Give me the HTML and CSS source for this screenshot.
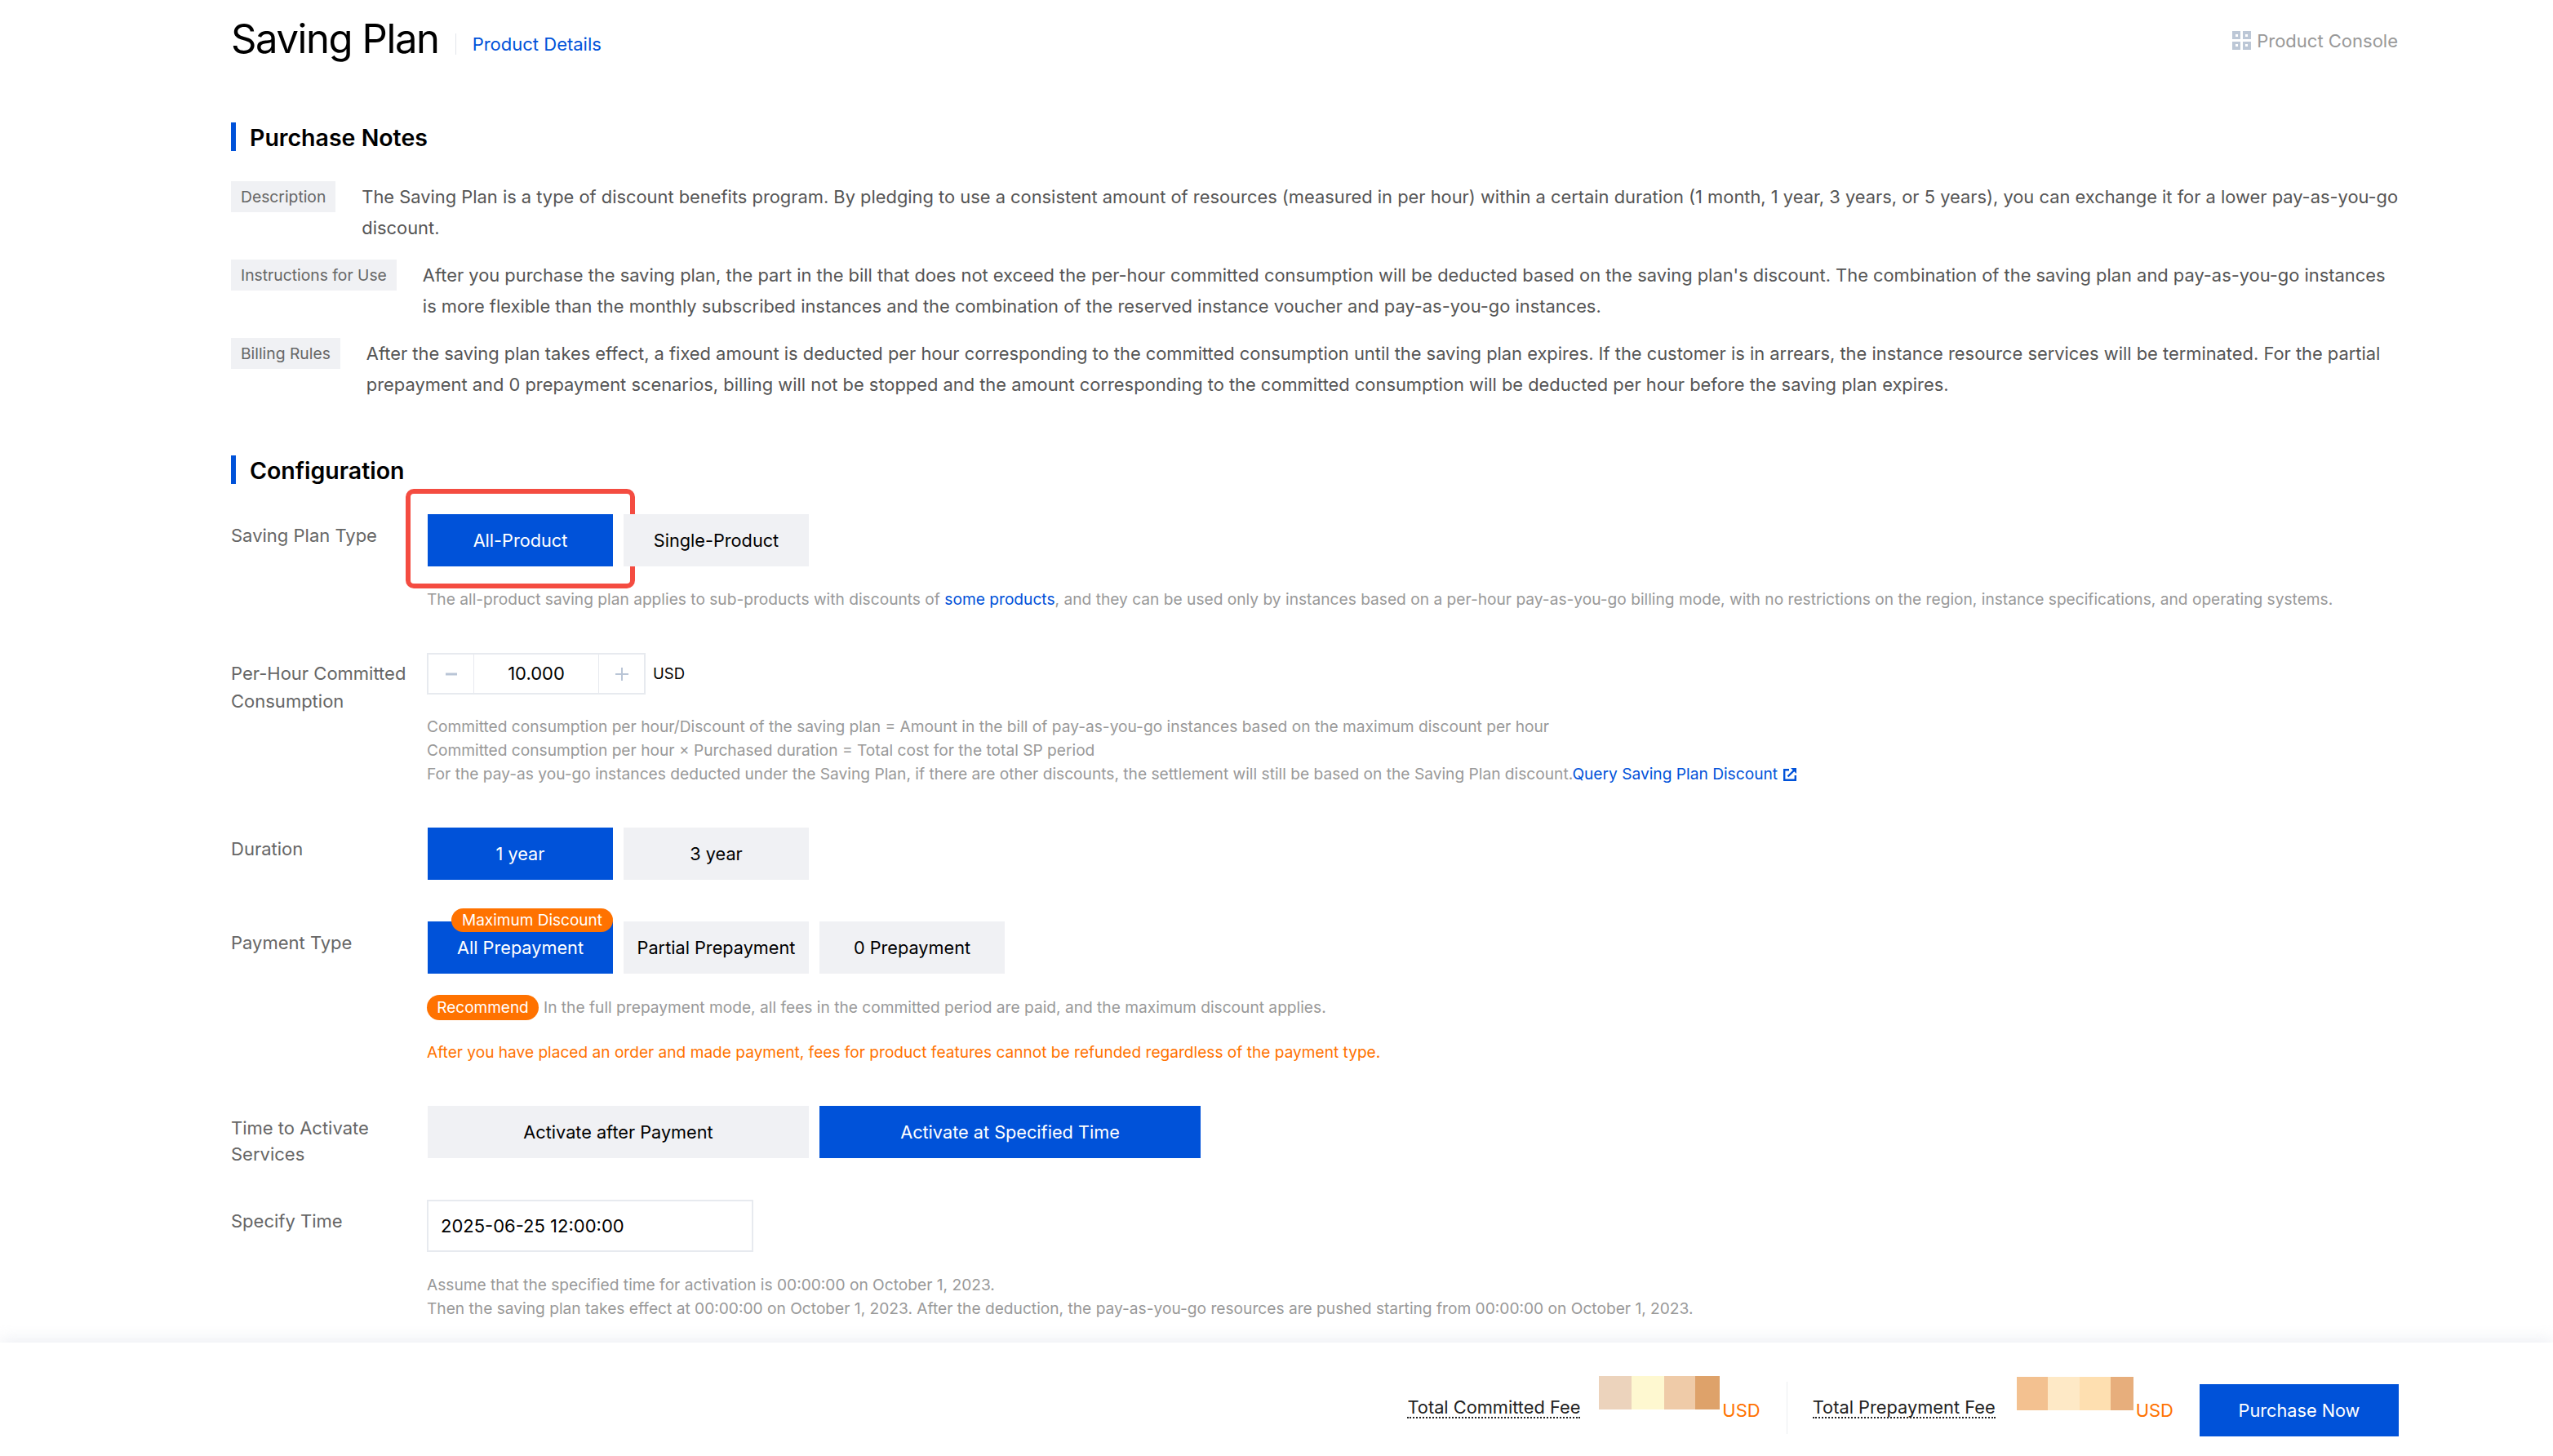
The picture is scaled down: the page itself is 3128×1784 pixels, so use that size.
FILE: index.html
```html
<!DOCTYPE html>
<html lang="en">
<head>
  <meta charset="UTF-8" />
  <title>Saving Plan</title>
  <link rel="stylesheet" href="styles.css">
</head>
<body>
  <main class="page">
    <header class="top">
      <h1>Saving Plan</h1>
      <a class="details">Product Details</a>
      <a class="console">
        <svg width="23" height="23" viewBox="0 0 23 23"><path fill="#bcc7d6" fill-rule="evenodd" d="M0 0h10v10H0zM4 4v3h3V4zM13 0h10v10H13zM16 4v3h3V4zM0 13h10v10H0zM4 16v3h3v-3zM13 13h10v10H13zM16 16v3h3v-3z"/></svg>
        Product Console
      </a>
    </header>

    <h2 class="section-title notes-title">Purchase Notes</h2>
    <div class="note">
      <span class="tag">Description</span>
      <p>The Saving Plan is a type of discount benefits program. By pledging to use a consistent amount of resources (measured in per hour) within a certain duration (1 month, 1 year, 3 years, or 5 years), you can exchange it for a lower pay-as-you-go discount.</p>
    </div>
    <div class="note">
      <span class="tag">Instructions for Use</span>
      <p>After you purchase the saving plan, the part in the bill that does not exceed the per-hour committed consumption will be deducted based on the saving plan's discount. The combination of the saving plan and pay-as-you-go instances is more flexible than the monthly subscribed instances and the combination of the reserved instance voucher and pay-as-you-go instances.</p>
    </div>
    <div class="note">
      <span class="tag">Billing Rules</span>
      <p>After the saving plan takes effect, a fixed amount is deducted per hour corresponding to the committed consumption until the saving plan expires. If the customer is in arrears, the instance resource services will be terminated. For the partial prepayment and 0 prepayment scenarios, billing will not be stopped and the amount corresponding to the committed consumption will be deducted per hour before the saving plan expires.</p>
    </div>

    <h2 class="section-title config-title">Configuration</h2>

    <div class="row row-type">
      <label>Saving Plan Type</label>
      <div class="field">
        <div class="options">
          <button class="opt active">All-Product<span class="highlight"></span></button>
          <button class="opt">Single-Product</button>
        </div>
        <p class="hint hint-type">The all-product saving plan applies to sub-products with discounts of <a class="link">some products</a>, and they can be used only by instances based on a per-hour pay-as-you-go billing mode, with no restrictions on the region, instance specifications, and operating systems.</p>
      </div>
    </div>

    <div class="row">
      <label class="label-top">Per-Hour Committed Consumption</label>
      <div class="field">
        <div class="amount">
          <div class="stepper">
            <span class="step">
              <svg width="14" height="14" viewBox="0 0 14 14"><path fill="#b9c5d6" d="M0 5.500h14v3H0z"/></svg>
            </span>
            <span class="value">10.000</span>
            <span class="step">
              <svg width="16" height="16" viewBox="0 0 16 16"><path fill="#b9c5d6" d="M0 7h16v2H0zM7 0h2v16H7z"/></svg>
            </span>
          </div>
          <span class="unit">USD</span>
        </div>
        <p class="hint hint-amount">Committed consumption per hour/Discount of the saving plan = Amount in the bill of pay-as-you-go instances based on the maximum discount per hour<br>
        Committed consumption per hour × Purchased duration = Total cost for the total SP period<br>
        For the pay-as you-go instances deducted under the Saving Plan, if there are other discounts, the settlement will still be based on the Saving Plan discount.<a class="link">Query Saving Plan Discount
          <svg class="ext" width="16" height="16" viewBox="0 0 16 16"><path fill="none" stroke="#0052d9" stroke-width="2.400" d="M7 2.200H1.200v12.600h13.600V9"/><path fill="none" stroke="#0052d9" stroke-width="2.400" d="M5.500 10.500 13 3"/><path fill="#0052d9" d="M9 0h7v7z"/></svg></a></p>
      </div>
    </div>

    <div class="row">
      <label>Duration</label>
      <div class="field">
        <div class="options">
          <button class="opt active">1 year</button>
          <button class="opt">3 year</button>
        </div>
      </div>
    </div>

    <div class="row">
      <label>Payment Type</label>
      <div class="field">
        <div class="options">
          <button class="opt active">All Prepayment<span class="badge">Maximum Discount</span></button>
          <button class="opt">Partial Prepayment</button>
          <button class="opt">0 Prepayment</button>
        </div>
        <div class="recommend">
          <span class="pill">Recommend</span>
          <span class="hint">In the full prepayment mode, all fees in the committed period are paid, and the maximum discount applies.</span>
        </div>
        <p class="warn">After you have placed an order and made payment, fees for product features cannot be refunded regardless of the payment type.</p>
      </div>
    </div>

    <div class="row">
      <label class="label-time">Time to Activate Services</label>
      <div class="field">
        <div class="options">
          <button class="opt wide">Activate after Payment</button>
          <button class="opt wide active">Activate at Specified Time</button>
        </div>
      </div>
    </div>

    <div class="row">
      <label>Specify Time</label>
      <div class="field">
        <div class="date">2025-06-25 12:00:00</div>
        <p class="hint hint-time">Assume that the specified time for activation is 00:00:00 on October 1, 2023.<br>
        Then the saving plan takes effect at 00:00:00 on October 1, 2023. After the deduction, the pay-as-you-go resources are pushed starting from 00:00:00 on October 1, 2023.</p>
      </div>
    </div>
  </main>

  <footer class="bar">
    <div class="fee">
      <span class="fee-name">Total Committed Fee</span>
      <span class="blur blur-a"><i class="c1"></i><i class="c2"></i><i class="c3"></i><i class="c4"></i></span>
      <span class="fee-unit">USD</span>
    </div>
    <span class="bar-line"></span>
    <div class="fee">
      <span class="fee-name">Total Prepayment Fee</span>
      <span class="blur blur-b"><i class="c5"></i><i class="c6"></i><i class="c7"></i><i class="c8"></i></span>
      <span class="fee-unit">USD</span>
    </div>
    <button class="buy">Purchase Now</button>
  </footer>
</body>
</html>
```

FILE: styles.css
```css
* {
  box-sizing: border-box;
}
html, body {
  height: 100%;
}
body {
  margin: 0;
  display: flex;
  flex-direction: column;
  height: 1784px;
  overflow: hidden;
  background: #fff;
  color: #000;
  font-family: Inter, "Noto Sans", sans-serif;
  font-size: 22px;
}
p, h1, h2 {
  margin: 0;
}
.page {
  flex: 1;
  min-height: 0;
  padding: 0 190px 0 283px;
}

/* top */
.top {
  display: flex;
  align-items: center;
  height: 96px;
}
h1 {
  font-size: 49px;
  font-weight: 400;
  letter-spacing: -1.4px;
  line-height: 92px;
  color: #000;
}
.details {
  margin: 12px 0 0 20px;
  padding-left: 20px;
  border-left: 1px solid #e3e6eb;
  font-size: 22px;
  line-height: 26px;
  color: #0052d9;
}
.console {
  display: flex;
  align-items: center;
  gap: 7px;
  margin: 3px 0 0 auto;
  font-size: 22px;
  color: #999;
}

/* sections */
.section-title {
  height: 35px;
  padding-left: 17px;
  border-left: 6px solid #0052d9;
  font-size: 28.500px;
  font-weight: 600;
  line-height: 37px;
}
.notes-title {
  margin-top: 54px;
  margin-bottom: 37px;
}
.config-title {
  margin-top: 68px;
  margin-bottom: 37px;
}

.note {
  display: flex;
  gap: 32px;
  margin-bottom: 20px;
}
.tag {
  flex: none;
  height: 38px;
  padding: 0 12px;
  background: #f0f1f4;
  font-size: 19.300px;
  line-height: 38px;
  color: #666;
}
.note p {
  margin-right: -6px;
  font-size: 21.860px;
  line-height: 38px;
  color: #555;
}

/* form rows */
.row {
  display: flex;
  margin-bottom: 51px;
}
.row:last-child {
  margin-bottom: 0;
}
.row > label {
  flex: none;
  width: 240px;
  padding-top: 9px;
  font-size: 22px;
  line-height: 34px;
  color: #666;
}
.row > .label-top {
  padding-top: 8px;
}
.row > .label-time {
  height: 64px;
  padding-top: 11px;
  line-height: 32px;
}
.field {
  flex: 1;
  min-width: 0;
}
.options {
  display: flex;
  gap: 13px;
  padding-left: 1px;
}
.opt {
  position: relative;
  width: 227px;
  height: 64px;
  padding: 0;
  border: none;
  background: #f0f1f4;
  font-family: inherit;
  font-size: 21.700px;
  color: #000;
}
.opt.active {
  background: #0052d9;
  color: #fff;
}
.opt.wide {
  width: 467px;
}
.highlight {
  position: absolute;
  left: -27px;
  top: -31px;
  width: 281px;
  height: 122px;
  border: 6px solid #f44c41;
  border-radius: 10px;
}
.badge {
  position: absolute;
  right: 0;
  top: -16px;
  height: 29px;
  width: 198px;
  border-radius: 15px;
  background: #ff7200;
  font-size: 19px;
  line-height: 29px;
  color: #fff;
}
.hint {
  font-size: 19.160px;
  line-height: 29px;
  color: #999;
}
.hint-type {
  margin-top: 26px;
}
.hint-amount {
  margin-top: 25px;
}
.hint-time {
  margin-top: 26px;
}
.link {
  color: #0052d9;
}
.ext {
  vertical-align: -2px;
  margin-left: 2px;
}

.amount {
  display: flex;
  align-items: center;
  gap: 9px;
}
.stepper {
  display: flex;
  width: 268px;
  height: 51px;
  border: 2px solid #e7eaef;
}
.step {
  display: flex;
  align-items: center;
  justify-content: center;
  width: 55px;
}
.value {
  flex: 1;
  border-left: 1px solid #e7eaef;
  border-right: 1px solid #e7eaef;
  font-size: 22px;
  line-height: 47px;
  text-align: center;
}
.unit {
  margin-top: -2px;
  font-size: 18.500px;
}

.recommend {
  display: flex;
  align-items: center;
  gap: 6px;
  margin-top: 26px;
}
.pill {
  height: 31px;
  width: 137px;
  border-radius: 16px;
  background: #ff7200;
  font-size: 19px;
  line-height: 31px;
  text-align: center;
  color: #fff;
}
.warn {
  margin-top: 25px;
  font-size: 19.100px;
  line-height: 29px;
  color: #ff7200;
}
.date {
  width: 400px;
  height: 64px;
  padding-left: 15px;
  border: 2px solid #e7eaef;
  font-size: 22px;
  line-height: 60px;
}

/* bottom bar */
.bar {
  display: flex;
  align-items: center;
  flex: none;
  height: 139px;
  padding: 27px 189px 0 0;
  justify-content: flex-end;
  background: #fff;
  box-shadow: 0 -4px 18px rgba(225, 229, 236, .6);
}
.fee {
  display: flex;
  align-items: flex-start;
  height: 70px;
  margin-top: -3px;
}
.fee-name {
  margin-top: 20px;
  height: 26px;
  padding-bottom: 0;
  border-bottom: 2px dotted #222;
  font-size: 21.800px;
  line-height: 24px;
  color: #222;
}
.blur {
  display: flex;
  height: 41px;
  margin-left: 23px;
}
.blur i {
  display: block;
  height: 100%;
}
.blur-a {
  margin-top: -6px;
}
.blur-b {
  margin-top: -5px;
  margin-left: 26px;
}
.c1 { width: 40px; background: #ecd3bc; }
.c2 { width: 40px; background: #fef8d0; }
.c3 { width: 38px; background: #efcba8; }
.c4 { width: 30px; background: #dea26a; }
.c5 { width: 38px; background: #f3c190; }
.c6 { width: 39px; background: #fee9c6; }
.c7 { width: 38px; background: #fedfb0; }
.c8 { width: 28px; background: #e7ae7c; }
.fee-unit {
  margin: 23px 0 0 3px;
  font-size: 22px;
  line-height: 26px;
  color: #ff7200;
}
.bar-line {
  width: 1px;
  height: 64px;
  margin: -6px 31px 0 32px;
  background: #eceef1;
}
.buy {
  width: 244px;
  height: 64px;
  margin: 0 0 0 32px;
  border: none;
  background: #0052d9;
  font-family: inherit;
  font-size: 21.700px;
  color: #fff;
}
```
